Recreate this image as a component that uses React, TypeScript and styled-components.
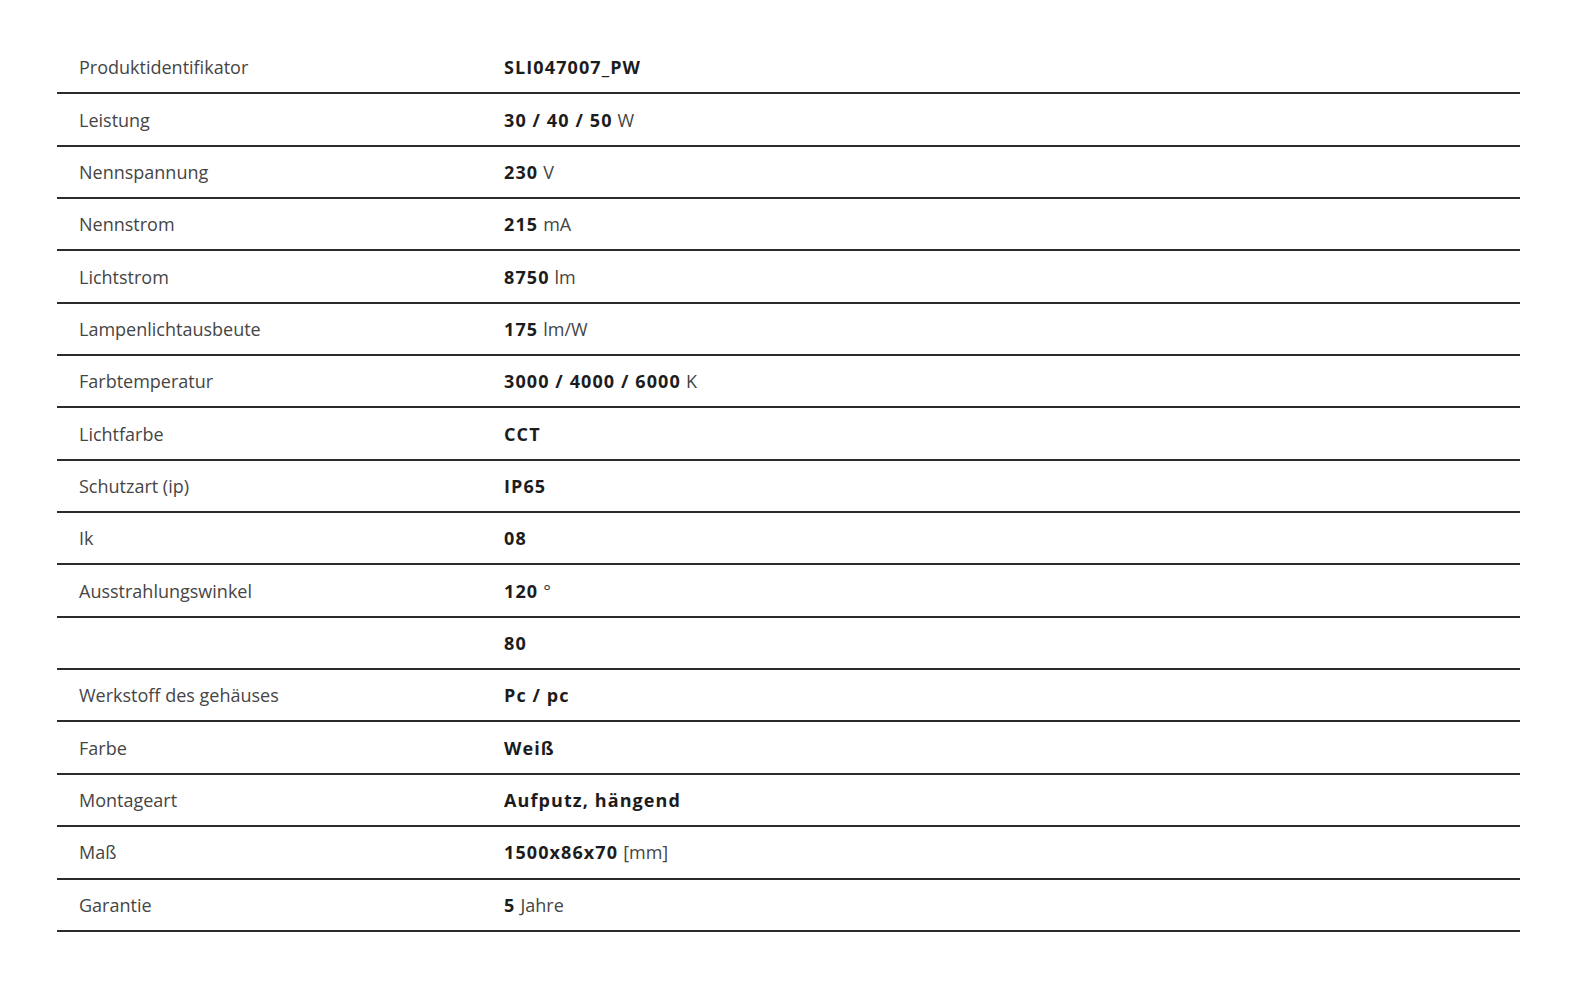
import styled, { createGlobalStyle } from 'styled-components';

type Spec = { label: string; value: string; unit?: string };

const specs: Spec[] = [
  { label: 'Produktidentifikator', value: 'SLI047007_PW' },
  { label: 'Leistung', value: '30 / 40 / 50', unit: 'W' },
  { label: 'Nennspannung', value: '230', unit: 'V' },
  { label: 'Nennstrom', value: '215', unit: 'mA' },
  { label: 'Lichtstrom', value: '8750', unit: 'lm' },
  { label: 'Lampenlichtausbeute', value: '175', unit: 'lm/W' },
  { label: 'Farbtemperatur', value: '3000 / 4000 / 6000', unit: 'K' },
  { label: 'Lichtfarbe', value: 'CCT' },
  { label: 'Schutzart (ip)', value: 'IP65' },
  { label: 'Ik', value: '08' },
  { label: 'Ausstrahlungswinkel', value: '120', unit: '°' },
  { label: '', value: '80' },
  { label: 'Werkstoff des gehäuses', value: 'Pc / pc' },
  { label: 'Farbe', value: 'Weiß' },
  { label: 'Montageart', value: 'Aufputz, hängend' },
  { label: 'Maß', value: '1500x86x70', unit: '[mm]' },
  { label: 'Garantie', value: '5', unit: 'Jahre' },
];

const GlobalStyle = createGlobalStyle`
  body {
    margin: 0;
    background: #ffffff;
    font-family: 'Open Sans', 'Noto Sans', sans-serif;
  }
`;

function App() {
  return (
    <>
      <GlobalStyle />
      <Page>
        <SpecTable>
          {specs.map((spec, i) => (
            <Row key={i}>
              <Label>{spec.label}</Label>
              <Value>
                <strong>{spec.value}</strong>
                {spec.unit && <Unit>{spec.unit}</Unit>}
              </Value>
            </Row>
          ))}
        </SpecTable>
      </Page>
    </>
  );
}

const Page = styled.div`
  min-height: 1000px;
  padding: 42px 0 0 57px;
  box-sizing: border-box;
`;

const SpecTable = styled.div`
  display: flex;
  flex-direction: column;
  width: 1463px;
`;

const Row = styled.div`
  display: grid;
  grid-template-columns: 447px 1fr;
  align-items: center;
  height: 52.35px;
  box-sizing: border-box;
  border-bottom: 2px solid #2b2b2b;
`;

const Label = styled.div`
  padding-left: 22px;
  font-size: 18px;
  color: #454545;
`;

const Value = styled.div`
  font-size: 18px;
  color: #1c1c1c;

  strong {
    font-weight: 700;
    letter-spacing: 1.1px;
  }
`;

const Unit = styled.span`
  margin-left: 5px;
  color: #454545;
`;

export default App;
